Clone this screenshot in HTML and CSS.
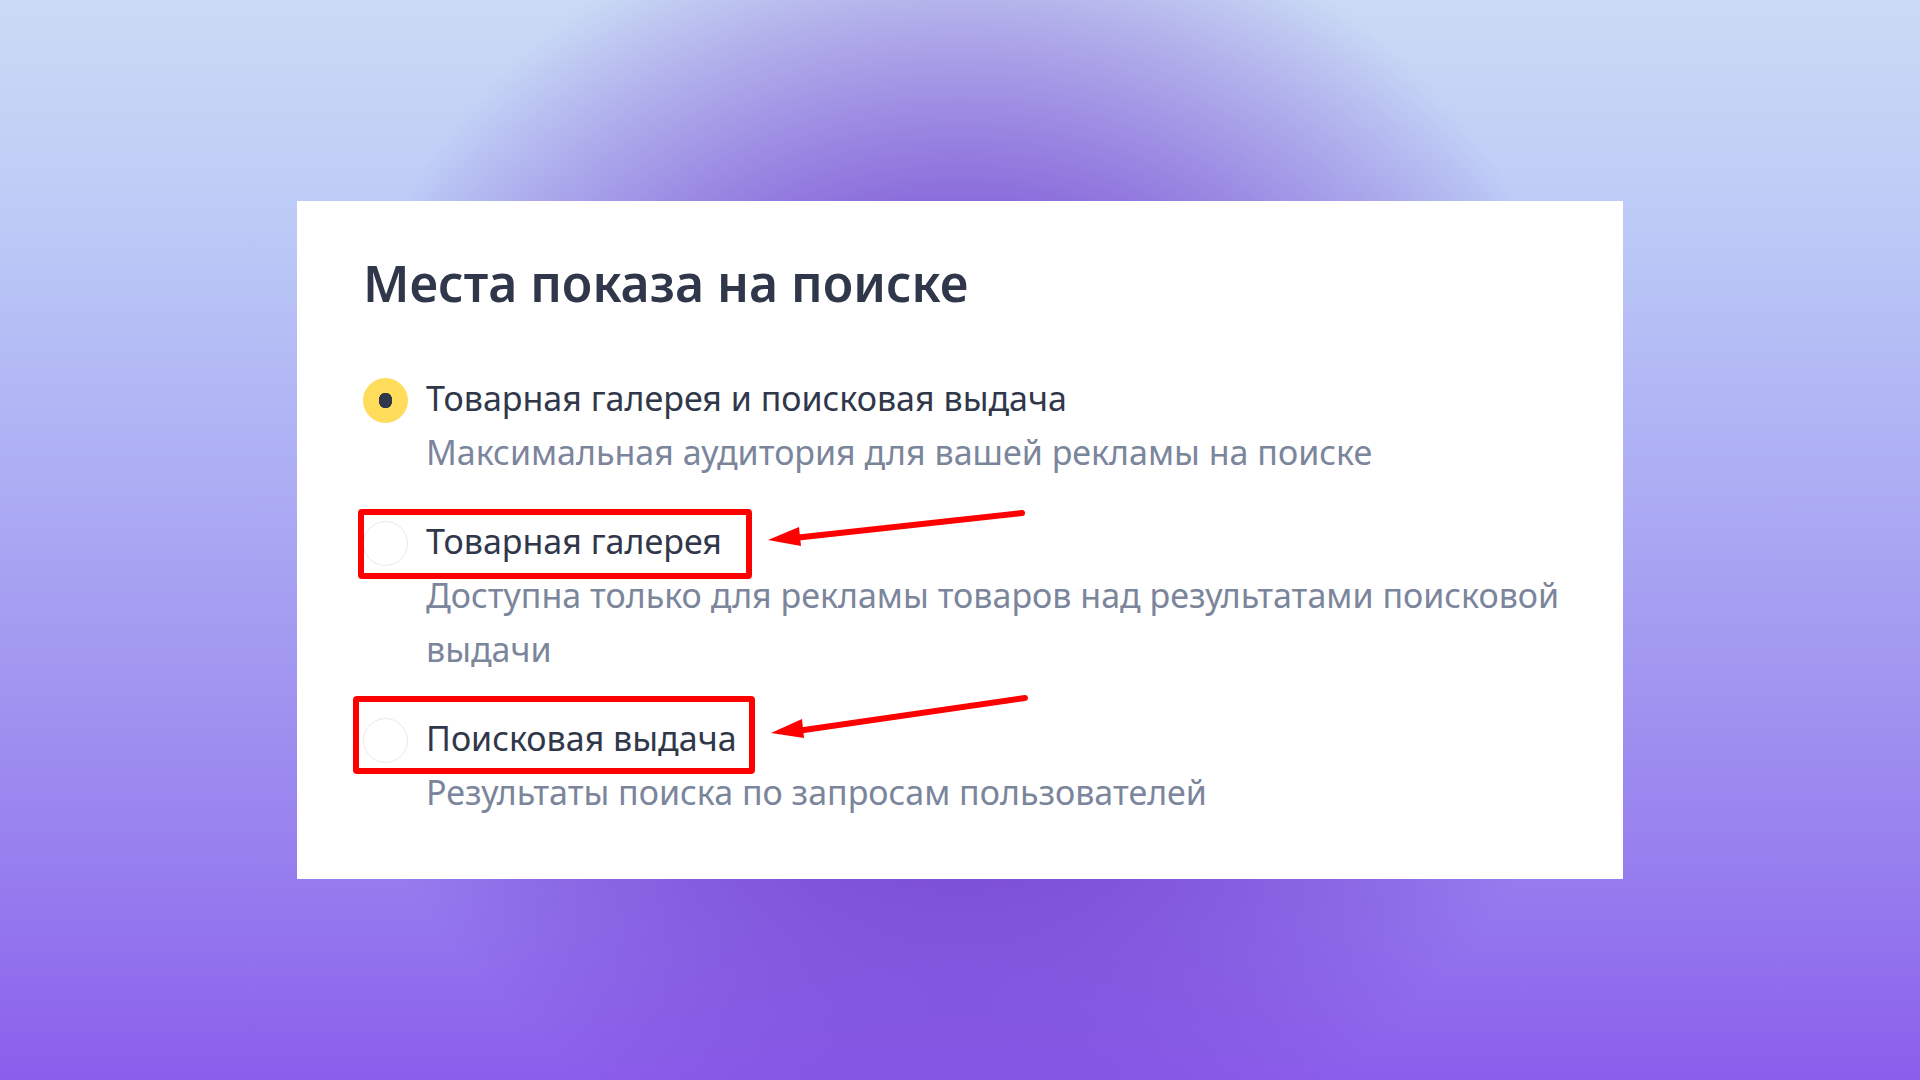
FILE: index.html
```html
<!DOCTYPE html>
<html lang="ru">
<head>
<meta charset="utf-8">
<meta name="viewport" content="width=device-width, initial-scale=1">
<title>Места показа на поиске</title>
<link rel="stylesheet" href="styles.css">
</head>
<body>
<main class="stage">
  <form class="card">
    <fieldset class="places">
      <legend class="title">Места показа на поиске</legend>
      <div class="options">
        <div class="option">
          <input class="radio" type="radio" name="place" id="place-all" aria-describedby="hint-all" checked>
          <div class="text">
            <label class="label" for="place-all">Товарная галерея и поисковая выдача</label>
            <p class="hint" id="hint-all">Максимальная аудитория для вашей рекламы на поиске</p>
          </div>
        </div>
        <div class="option">
          <input class="radio" type="radio" name="place" id="place-gallery" aria-describedby="hint-gallery">
          <div class="text">
            <label class="label" for="place-gallery">Товарная галерея</label>
            <p class="hint" id="hint-gallery">Доступна только для рекламы товаров над результатами поисковой выдачи</p>
          </div>
          <span class="frame frame-gallery"></span>
          <svg class="arrow arrow-gallery" width="264" height="48" viewBox="0 0 264 48" aria-hidden="true">
            <path class="shaft" d="M28 34 256 9"/>
            <path class="head" d="M2 36 33 23 35 42Z"/>
          </svg>
        </div>
        <div class="option">
          <input class="radio" type="radio" name="place" id="place-search" aria-describedby="hint-search">
          <div class="text">
            <label class="label" for="place-search">Поисковая выдача</label>
            <p class="hint" id="hint-search">Результаты поиска по запросам пользователей</p>
          </div>
          <span class="frame frame-search"></span>
          <svg class="arrow arrow-search" width="264" height="48" viewBox="0 0 264 48" aria-hidden="true">
            <path class="shaft" d="M28 38 256 5"/>
            <path class="head" d="M2 40 33 26 35 45Z"/>
          </svg>
        </div>
      </div>
    </fieldset>
  </form>
</main>
</body>
</html>
```
FILE: styles.css
```css
* {
  box-sizing: border-box;
}

body {
  margin: 0;
  font-family: "Noto Sans", sans-serif;
  color: #30374a;
}

.stage {
  min-height: 100vh;
  display: flex;
  align-items: center;
  justify-content: center;
  padding: 24px;
  background:
    radial-gradient(circle at center,
      rgba(112, 56, 204, 0.9) 0,
      rgba(112, 56, 204, 0.64) 340px,
      rgba(112, 56, 204, 0.24) 540px,
      rgba(112, 56, 204, 0) 656px),
    linear-gradient(#cadbf5 0%, #bccbf6 20%, #aeb0f4 42%, #a093f0 65%, #9376ee 86%, #8b5deb 100%);
}

.card {
  width: 100%;
  max-width: 1326px;
  padding: 44px 30px 60px 66px;
  background: #fff;
}

.places {
  margin: 0;
  padding: 0;
  border: 0;
  min-width: 0;
}

.title {
  padding: 0;
  font-size: 50px;
  line-height: 76px;
  font-weight: 600;
}

.options {
  display: flex;
  flex-direction: column;
  gap: 35px;
  padding-top: 50px;
}

.option {
  position: relative;
  display: flex;
  align-items: flex-start;
  gap: 18px;
}

.radio {
  appearance: none;
  flex: none;
  width: 45px;
  height: 45px;
  margin: 7px 0 0;
  border: 1px solid #e6e9f3;
  border-radius: 50%;
  background: #fff;
}

.radio:checked {
  border-color: #ffdc5a;
  background: radial-gradient(7px 8px, #30374a 95%, #ffdc5a 100%);
}

.text {
  flex: 1;
  min-width: 0;
  font-size: 34px;
  line-height: 54px;
}

.label {
  display: block;
}

.hint {
  margin: 0;
  color: #7b859b;
}

/* Red callouts laid over the options */
.frame {
  position: absolute;
  border: 6px solid #f00;
  border-radius: 4px;
  pointer-events: none;
}

.frame-gallery {
  left: -5px;
  top: -5px;
  width: 394px;
  height: 70px;
}

.frame-search {
  left: -10px;
  top: -15px;
  width: 402px;
  height: 78px;
}

.arrow {
  position: absolute;
  pointer-events: none;
}

.arrow-gallery {
  left: 403px;
  top: -10px;
}

.arrow-search {
  left: 406px;
  top: -18px;
}

.shaft {
  fill: none;
  stroke: #f00;
  stroke-width: 6;
  stroke-linecap: round;
}

.head {
  fill: #f00;
}
```
